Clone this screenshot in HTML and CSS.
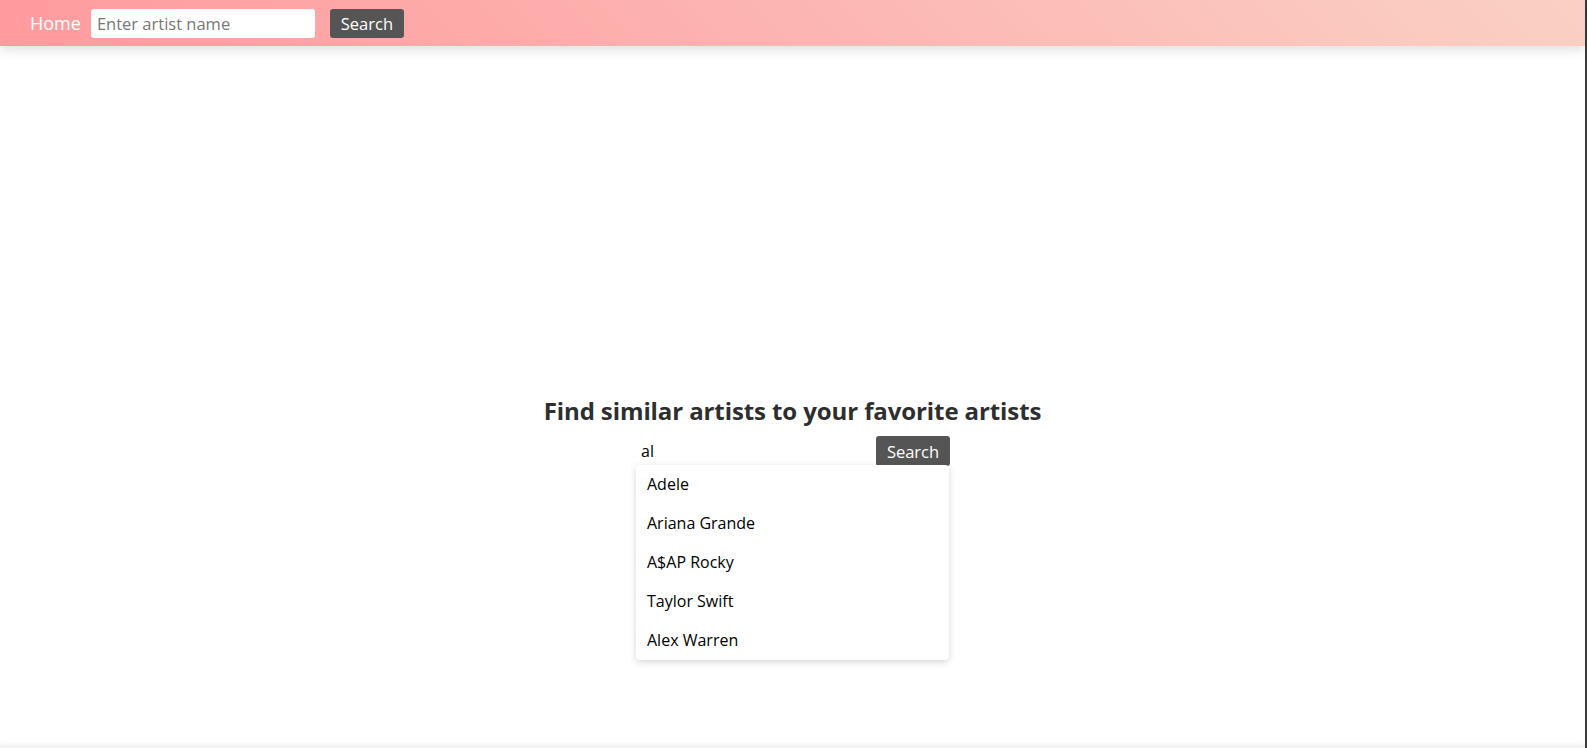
FILE: index.html
```html
<!DOCTYPE html>
<html lang="en">
<head>
<meta charset="utf-8">
<title>Similar Artists</title>
<link rel="stylesheet" href="styles.css">
</head>
<body>
<div class="frame">
  <div class="page">
    <nav class="nav">
      <a class="nav-home" href="#">Home</a>
      <input class="nav-input" type="text" placeholder="Enter artist name">
      <button class="btn nav-btn" type="button">Search</button>
    </nav>
    <main class="main">
      <h1 class="title">Find similar artists to your favorite artists</h1>
      <div class="search">
        <input class="search-input" type="text" value="al">
        <button class="btn" type="button">Search</button>
        <ul class="suggest">
          <li class="suggest-item">Adele</li>
          <li class="suggest-item">Ariana Grande</li>
          <li class="suggest-item">A$AP Rocky</li>
          <li class="suggest-item">Taylor Swift</li>
          <li class="suggest-item">Alex Warren</li>
        </ul>
      </div>
    </main>
    <footer class="footer"></footer>
  </div>
  <div class="edge"></div>
</div>
</body>
</html>
```

FILE: styles.css
```css
html, body {
  margin: 0;
  padding: 0;
  height: 100%;
  overflow: hidden;
}

body {
  font-family: "Open Sans", "Liberation Sans", sans-serif;
  background: #fff;
}

.frame {
  display: flex;
  height: 748px;
}

.page {
  flex: 1;
  display: flex;
  flex-direction: column;
  min-width: 0;
}

.edge {
  width: 2px;
  background: #3a3a3a;
}

.nav {
  height: 46px;
  flex: none;
  display: flex;
  align-items: center;
  padding-left: 30px;
  background: linear-gradient(45deg, #ff9a9e 0%, #fad0c4 99%, #fad0c4 100%);
  box-shadow: 0 3px 12px rgba(0, 0, 0, 0.14);
  position: relative;
  z-index: 2;
}

.nav-home {
  color: #fff;
  text-decoration: none;
  font-size: 18px;
  margin-right: 10px;
}

.nav-input {
  width: 224px;
  height: 29px;
  box-sizing: border-box;
  border: none;
  border-radius: 3px;
  padding: 0 6px;
  font-family: inherit;
  font-size: 16.5px;
  color: #222;
  background: #fff;
  outline: none;
}

.nav-input::placeholder {
  color: #777;
}

.btn {
  height: 29px;
  width: 74px;
  box-sizing: border-box;
  border: none;
  border-radius: 3px;
  background: #555;
  color: #fff;
  font-family: inherit;
  font-size: 16.5px;
  padding: 0;
  cursor: pointer;
}

.nav-btn {
  margin-left: 15px;
}

.main {
  flex: 1;
  display: flex;
  flex-direction: column;
  align-items: center;
  padding-top: 349px;
}

.title {
  margin: 0;
  font-size: 24px;
  line-height: 32px;
  font-weight: 700;
  letter-spacing: -0.1px;
  color: #2e2e2e;
}

.search {
  position: relative;
  display: flex;
  align-items: center;
  gap: 6px;
  margin-top: 9px;
  margin-left: 1px;
}

.search .btn {
  height: 30px;
}

.search-input {
  width: 234px;
  height: 30px;
  box-sizing: border-box;
  border: none;
  padding: 0 5px;
  font-family: inherit;
  font-size: 16px;
  color: #000;
  background: transparent;
  outline: none;
}

.suggest {
  position: absolute;
  top: 29px;
  left: 0;
  width: 313px;
  margin: 0;
  padding: 0;
  list-style: none;
  background: #fff;
  border-radius: 4px;
  box-shadow: 0 2px 7px rgba(0, 0, 0, 0.16);
}

.suggest-item {
  height: 39px;
  line-height: 39px;
  padding: 0 11px;
  font-size: 16px;
  color: #000;
}

.footer {
  height: 3px;
  flex: none;
  background: #f3f3f3;
  box-shadow: 0 -1px 4px rgba(0, 0, 0, 0.06);
}
```
